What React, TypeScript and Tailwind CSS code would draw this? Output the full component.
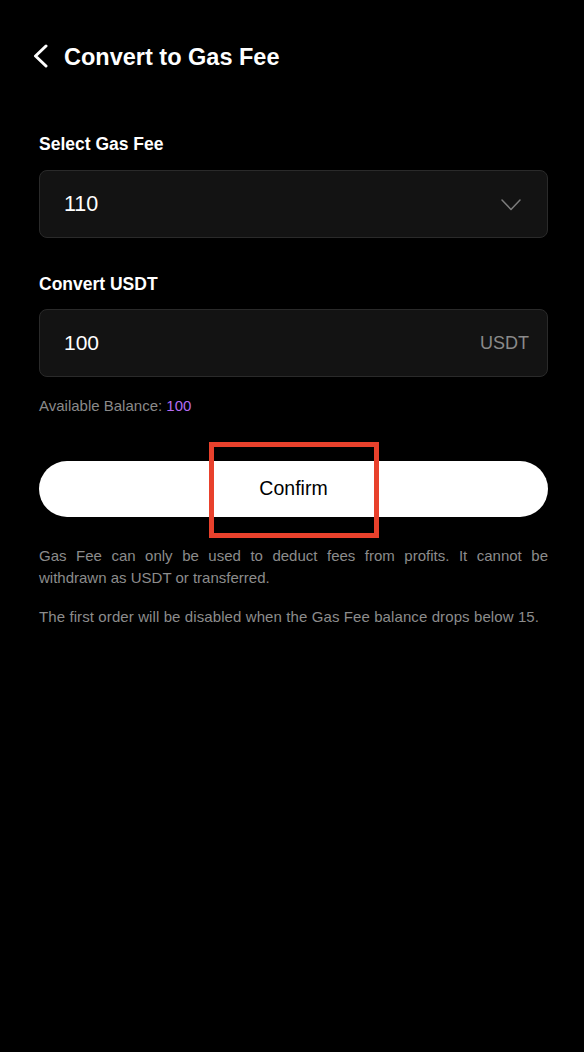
const font = { fontFamily: '"Liberation Sans", Arial, sans-serif' };

export default function App() {
  return (
    <div className="min-h-[1052px] w-full bg-black text-white" style={font}>
      <header className="flex items-center gap-[16px] px-[32px] pt-[42px]">
        <svg width="16" height="24" viewBox="0 0 16 24" fill="none" className="-mt-[2px]">
          <polyline points="14,2 3.5,12 14,22" stroke="#fff" strokeWidth="3" strokeLinecap="round" strokeLinejoin="round" />
        </svg>
        <h1 className="text-[23.5px] font-bold leading-[30px]">Convert to Gas Fee</h1>
      </header>

      <main className="pl-[39px] pr-[36px] pt-[61px]">
        <label className="block text-[17.5px] font-bold leading-[22px]">Select Gas Fee</label>
        <div className="mt-[15px] flex h-[68px] items-center justify-between rounded-[8px] border border-[#2a2a2a] bg-[#131313] pl-[24px] pr-[26px]">
          <span className="text-[21.5px]">110</span>
          <svg width="20" height="12" viewBox="0 0 20 12" fill="none" className="mt-[1px]">
            <polyline points="1,1 10,10.5 19,1" stroke="#7c7c7c" strokeWidth="1.5" strokeLinecap="round" strokeLinejoin="round" />
          </svg>
        </div>

        <label className="mt-[35px] block text-[17.5px] font-bold leading-[22px]">Convert USDT</label>
        <div className="mt-[14px] flex h-[68px] items-center justify-between rounded-[8px] border border-[#2a2a2a] bg-[#131313] pl-[24px] pr-[18px]">
          <span className="text-[21px]">100</span>
          <span className="text-[18px] text-[#8a8a8a]">USDT</span>
        </div>

        <p className="mt-[19px] text-[15px] leading-[20px] text-[#8a8a8a]">
          Available Balance: <span className="text-[#b56cf2]">100</span>
        </p>

        <div className="relative mt-[45px]">
          <button className="flex h-[56px] w-full items-center justify-center rounded-full bg-white text-[19.5px] text-black">
            Confirm
          </button>
          <div className="pointer-events-none absolute left-[170px] top-[-19px] h-[96px] w-[170px] border-[5px] border-[#e8412c]" />
        </div>

        <p className="mt-[28px] text-justify text-[15px] leading-[22px] text-[#8c8c8c]">
          Gas Fee can only be used to deduct fees from profits. It cannot be withdrawn as USDT or transferred.
        </p>
        <p className="mt-[17px] text-[15px] leading-[22px] tracking-[0.1px] text-[#8c8c8c]">
          The first order will be disabled when the Gas Fee balance drops below 15.
        </p>
      </main>
    </div>
  );
}
